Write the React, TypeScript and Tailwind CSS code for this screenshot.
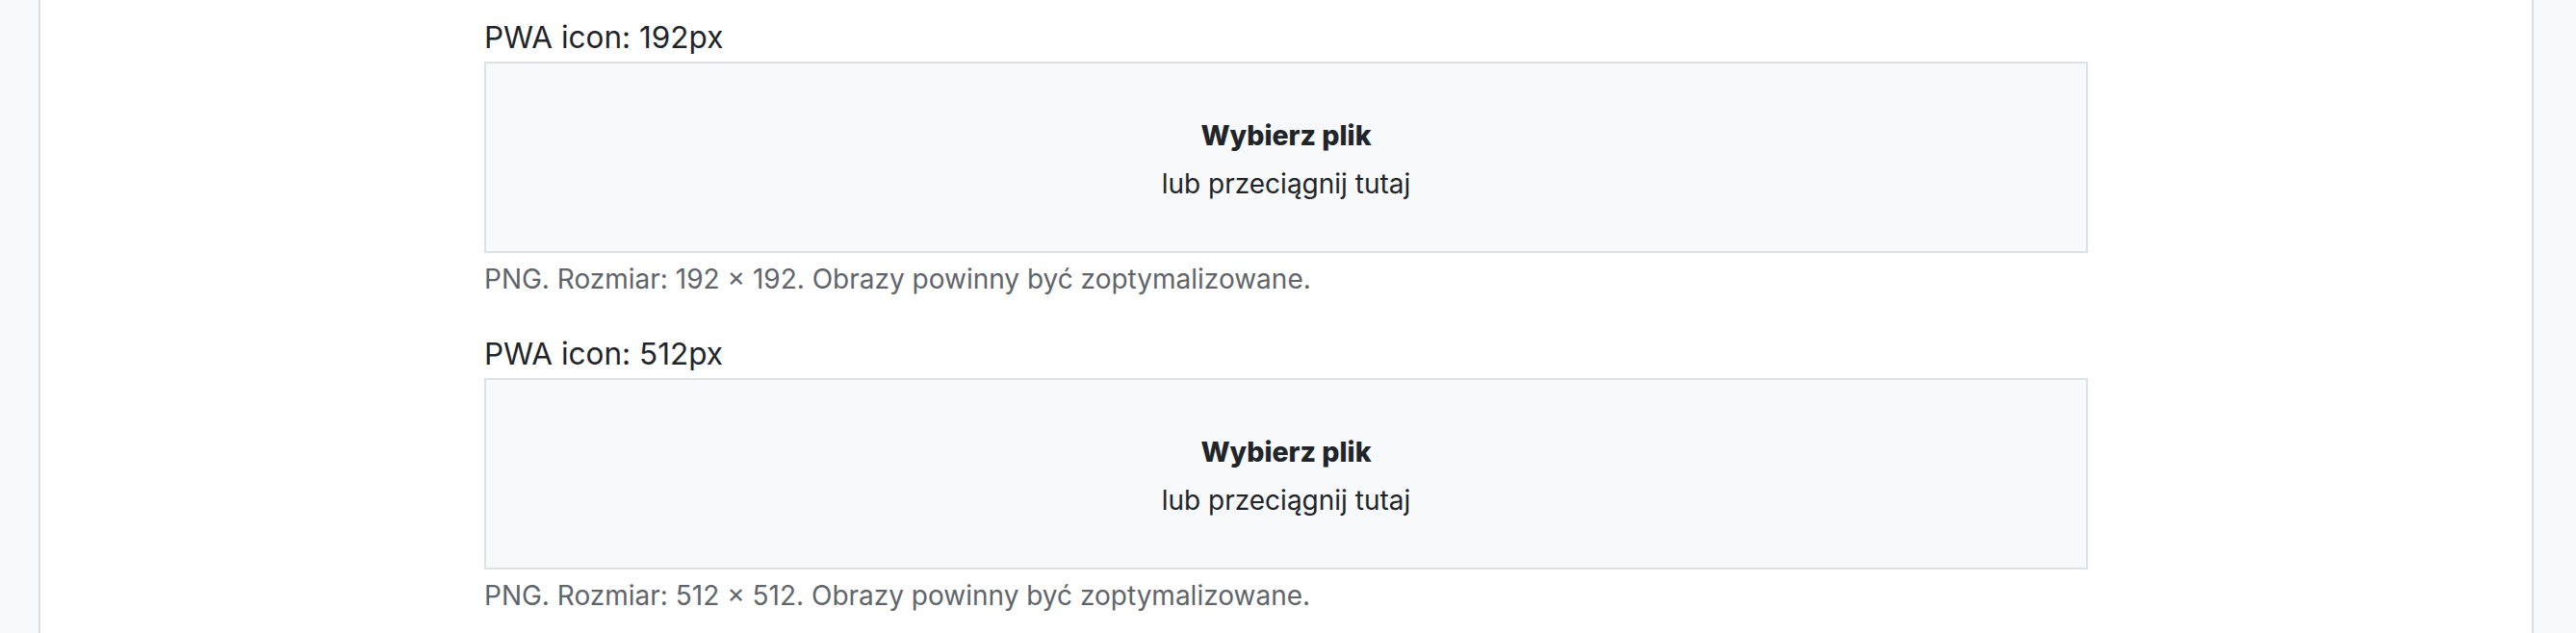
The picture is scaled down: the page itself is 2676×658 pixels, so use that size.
const sections = [
  { label: "PWA icon: 192px", size: "192 × 192" },
  { label: "PWA icon: 512px", size: "512 × 512" },
];

function Dropzone() {
  return (
    <div className="mt-[7px] flex h-[199px] flex-col items-center justify-center gap-[10px] border-2 border-[#dee2e6] bg-[#f8f9fa] pt-[4px] text-[#212529]">
      <div className="text-[28.5px] font-extrabold leading-[40px]">Wybierz plik</div>
      <div className="text-[28px] leading-[40px]">lub przeciągnij tutaj</div>
    </div>
  );
}

export default function App() {
  return (
    <div
      className="flex h-[658px] w-full bg-[#f8f9fa]"
      style={{ fontFamily: "Inter, 'Noto Sans', sans-serif" }}
    >
      <div className="w-[40px] shrink-0" />
      <div className="flex-1 overflow-hidden border-x-2 border-[#dcdcdc] bg-white pl-[461px] pt-[21px]">
        <div className="w-[1666px]">
          {sections.map((s, i) => (
            <div key={s.label} className={i > 0 ? "mt-[42px]" : ""}>
              <label className="block text-[31.5px] leading-[36px] text-[#212529]">{s.label}</label>
              <Dropzone />
              <p className="mt-[9px] text-[28px] leading-[36px] text-[#5f656b]">
                PNG. Rozmiar: {s.size}. Obrazy powinny być zoptymalizowane.
              </p>
            </div>
          ))}
        </div>
      </div>
      <div className="w-[44px] shrink-0" />
    </div>
  );
}
